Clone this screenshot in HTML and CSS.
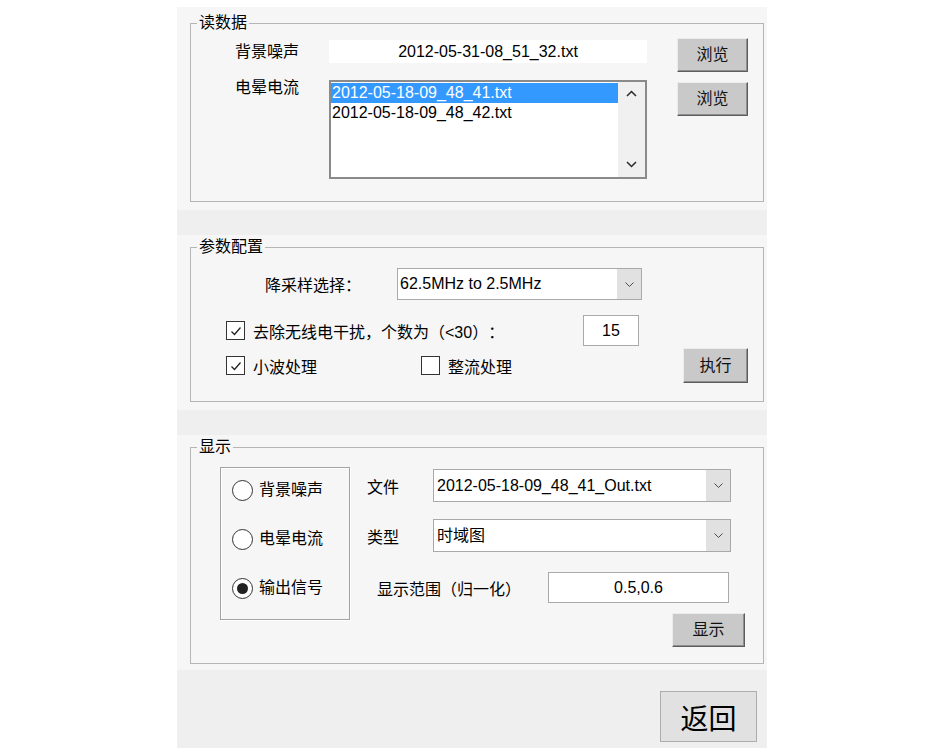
FILE: index.html
```html
<!DOCTYPE html>
<html lang="zh-CN">
<head>
<meta charset="utf-8">
<title>数据处理</title>
<link rel="stylesheet" href="styles.css">
</head>
<body>
<div class="panel">
  <section class="band band-read">
    <fieldset class="group group-read">
      <legend>读数据</legend>
      <div class="read-row read-row-noise">
        <span class="read-label">背景噪声</span>
        <div class="path-field">2012-05-31-08_51_32.txt</div>
        <button class="btn3d btn-browse">浏览</button>
      </div>
      <div class="read-row read-row-corona">
        <span class="read-label">电晕电流</span>
        <div class="listbox">
          <ul class="list-items">
            <li class="list-item selected">2012-05-18-09_48_41.txt</li>
            <li class="list-item">2012-05-18-09_48_42.txt</li>
          </ul>
          <div class="list-scroll">
            <span class="scroll-btn"><svg width="11" height="7" viewBox="0 0 11 7"><polyline points="1,6 5.5,1.5 10,6" fill="none" stroke="#2a2a2a" stroke-width="1.5"/></svg></span>
            <span class="scroll-btn scroll-btn-down"><svg width="11" height="7" viewBox="0 0 11 7"><polyline points="1,1 5.5,5.5 10,1" fill="none" stroke="#2a2a2a" stroke-width="1.5"/></svg></span>
          </div>
        </div>
        <button class="btn3d btn-browse">浏览</button>
      </div>
    </fieldset>
  </section>

  <section class="band band-config">
    <fieldset class="group group-config">
      <legend>参数配置</legend>
      <div class="cfg-row cfg-row-rate">
        <span class="rate-label">降采样选择：</span>
        <div class="combo combo-rate">
          <span class="combo-text">62.5MHz to 2.5MHz</span>
          <span class="combo-arrow"><svg width="9" height="5" viewBox="0 0 9 5"><polyline points="0.5,0.5 4.5,4.5 8.5,0.5" fill="none" stroke="#4a4a4a" stroke-width="1"/></svg></span>
        </div>
      </div>
      <div class="cfg-row cfg-row-radio">
        <label class="check">
          <span class="check-box"><svg width="14" height="14" viewBox="0 0 14 14"><polyline points="2.5,7.5 5.5,10.5 11.5,3.5" fill="none" stroke="#222" stroke-width="1.3"/></svg></span>
          <span>去除无线电干扰，个数为（&lt;30）：</span>
        </label>
        <div class="num-field">15</div>
      </div>
      <div class="cfg-row cfg-row-proc">
        <label class="check check-wavelet">
          <span class="check-box"><svg width="14" height="14" viewBox="0 0 14 14"><polyline points="2.5,7.5 5.5,10.5 11.5,3.5" fill="none" stroke="#222" stroke-width="1.3"/></svg></span>
          <span>小波处理</span>
        </label>
        <label class="check">
          <span class="check-box"></span>
          <span>整流处理</span>
        </label>
        <button class="btn3d btn-run">执行</button>
      </div>
    </fieldset>
  </section>

  <section class="band band-display">
    <fieldset class="group group-display">
      <legend>显示</legend>
      <div class="disp-body">
        <div class="radio-box">
          <label class="radio"><span class="radio-dot"></span><span>背景噪声</span></label>
          <label class="radio"><span class="radio-dot"></span><span>电晕电流</span></label>
          <label class="radio"><span class="radio-dot on"><span class="radio-mark"></span></span><span>输出信号</span></label>
        </div>
        <div class="disp-col">
          <div class="disp-row disp-row-file">
            <span class="disp-label">文件</span>
            <div class="combo combo-wide">
              <span class="combo-text">2012-05-18-09_48_41_Out.txt</span>
              <span class="combo-arrow"><svg width="9" height="5" viewBox="0 0 9 5"><polyline points="0.5,0.5 4.5,4.5 8.5,0.5" fill="none" stroke="#4a4a4a" stroke-width="1"/></svg></span>
            </div>
          </div>
          <div class="disp-row disp-row-type">
            <span class="disp-label">类型</span>
            <div class="combo combo-wide">
              <span class="combo-text">时域图</span>
              <span class="combo-arrow"><svg width="9" height="5" viewBox="0 0 9 5"><polyline points="0.5,0.5 4.5,4.5 8.5,0.5" fill="none" stroke="#4a4a4a" stroke-width="1"/></svg></span>
            </div>
          </div>
          <div class="disp-row disp-row-range">
            <span class="range-label">显示范围（归一化）</span>
            <div class="range-field">0.5,0.6</div>
          </div>
          <div class="disp-row disp-row-action">
            <button class="btn3d btn-show">显示</button>
          </div>
        </div>
      </div>
    </fieldset>
  </section>

  <button class="btn-back">返回</button>
</div>
</body>
</html>
```

FILE: styles.css
```css
* { box-sizing: border-box; }

body {
  margin: 0;
  background: #ffffff;
  font-family: "Liberation Sans", "Noto Sans CJK SC", sans-serif;
  font-size: 16px;
  font-weight: 400;
  color: #000;
  text-spacing-trim: space-all;
}

.panel {
  width: 590px;
  height: 741px;
  margin: 7px 0 0 177px;
  background: #efefef;
  display: flex;
  flex-direction: column;
}

.band {
  background: #f6f6f6;
  padding: 2px 3px 8px 13px;
}
.band-read { padding-top: 6px; }
.band-config { margin-top: 25px; }
.band-display { margin-top: 25px; padding-bottom: 6px; }

.group {
  margin: 0;
  padding: 0;
  width: 574px;
  min-width: 0;
  border: 1px solid #b5b5b5;
}
.group legend {
  margin-left: 6px;
  padding: 0 2px;
  font-size: 16px;
  line-height: 20px;
}
.group-read { height: 189px; }
.group-config { height: 165px; }
.group-display { height: 227px; }

/* ---- read group ---- */
.read-row {
  display: flex;
  align-items: flex-start;
  padding-left: 44px;
}
.read-row-noise { margin-top: 5px; }
.read-row-corona { margin-top: 8px; }
.read-label {
  width: 94px;
  line-height: 16px;
  white-space: nowrap;
}
.read-row-noise .read-label { margin-top: 6px; }

.path-field {
  width: 318px;
  height: 23px;
  margin-top: 2px;
  background: #fff;
  text-align: center;
  line-height: 23px;
  white-space: nowrap;
}

.btn3d {
  font: inherit;
  font-size: 16px;
  color: #111;
  background: #c9c9c9;
  border: 1px solid;
  border-color: #ececec #5d5d5d #5d5d5d #ececec;
  box-shadow: inset -1px -1px 0 #8f8f8f;
  padding: 0;
  line-height: 1;
}
.btn-browse {
  width: 71px;
  height: 34px;
  margin-left: 30px;
}
.read-row-corona .btn-browse { margin-top: 2px; }

.listbox {
  width: 318px;
  height: 99px;
  border: 2px solid #8a8a8a;
  background: #fff;
  display: flex;
}
.list-items {
  flex: 1;
  margin: 0;
  padding: 1px 0 0;
  list-style: none;
}
.list-item {
  height: 20px;
  line-height: 20px;
  padding-left: 1px;
  white-space: nowrap;
}
.list-item.selected {
  background: #3399ff;
  color: #fff;
}
.list-scroll {
  width: 27px;
  background: #f0f0f0;
  display: flex;
  flex-direction: column;
  justify-content: space-between;
}
.scroll-btn {
  height: 22px;
  display: flex;
  align-items: center;
  justify-content: center;
}
.scroll-btn-down { height: 26px; }

/* ---- config group ---- */
.cfg-row {
  display: flex;
  align-items: center;
  white-space: nowrap;
}
.cfg-row-rate {
  margin-top: 11px;
  height: 32px;
  padding-left: 74px;
}
.rate-label { width: 132px; }

.combo {
  display: flex;
  background: #fff;
  border: 1px solid #a9a9a9;
}
.combo-rate { width: 245px; height: 32px; }
.combo-text {
  flex: 1;
  padding-left: 2px;
  line-height: 30px;
  white-space: nowrap;
}
.combo-arrow {
  width: 24px;
  background: #e1e1e1;
  display: flex;
  align-items: center;
  justify-content: center;
}

.cfg-row-radio {
  margin-top: 15px;
  height: 31px;
  padding-left: 35px;
}
.check {
  display: flex;
  align-items: center;
  gap: 8px;
}
.check-box {
  width: 19px;
  height: 19px;
  border: 1px solid #333;
  background: #fff;
  display: flex;
  align-items: center;
  justify-content: center;
}
.num-field {
  margin-left: auto;
  margin-right: 124px;
  width: 56px;
  height: 31px;
  border: 1px solid #a9a9a9;
  background: #fff;
  text-align: center;
  line-height: 29px;
}
.cfg-row-proc {
  margin-top: 2px;
  height: 35px;
  padding-left: 35px;
}
.check-wavelet { width: 195px; }
.btn-run {
  margin-left: auto;
  margin-right: 15px;
  width: 65px;
  height: 35px;
}

/* ---- display group ---- */
.disp-body {
  display: flex;
  align-items: flex-start;
  padding: 10px 0 0 29px;
}
.radio-box {
  width: 130px;
  height: 153px;
  border: 1px solid #a3a3a3;
  box-shadow: inset 1px 1px 0 #fff, 1px 1px 0 #fff;
  display: flex;
  flex-direction: column;
  gap: 29px;
  padding: 12px 0 0 11px;
}
.radio {
  display: flex;
  align-items: center;
  gap: 6px;
  height: 20px;
  line-height: 20px;
  white-space: nowrap;
}
.radio-dot {
  width: 21px;
  height: 21px;
  border-radius: 50%;
  border: 1.6px solid #333;
  background: #fff;
  display: flex;
  align-items: center;
  justify-content: center;
}
.radio-mark {
  width: 11px;
  height: 11px;
  border-radius: 50%;
  background: #222;
}

.disp-col {
  margin-left: 17px;
  margin-top: 2px;
  width: 378px;
  display: flex;
  flex-direction: column;
}
.disp-row {
  display: flex;
  align-items: center;
  white-space: nowrap;
}
.disp-label { width: 66px; }
.combo-wide { width: 298px; height: 33px; }
.combo-wide .combo-text { padding-left: 3px; line-height: 31px; }
.disp-row-file { height: 33px; }
.disp-row-type { margin-top: 17px; height: 33px; }
.disp-row-range {
  margin-top: 20px;
  height: 31px;
  padding-left: 10px;
}
.range-label { width: 171px; }
.range-field {
  width: 181px;
  height: 31px;
  border: 1px solid #a9a9a9;
  background: #fff;
  text-align: center;
  line-height: 29px;
}
.disp-row-action {
  margin-top: 10px;
  justify-content: flex-end;
}
.btn-show { width: 73px; height: 34px; }

/* ---- back button ---- */
.btn-back {
  align-self: flex-end;
  margin: 21px 10px 0 0;
  width: 97px;
  height: 51px;
  padding: 0;
  background: #e1e1e1;
  border: 1px solid #adadad;
  font-family: "Noto Sans CJK SC", sans-serif;
  font-size: 28px;
  font-weight: 400;
  line-height: 1;
  color: #000;
}
```
